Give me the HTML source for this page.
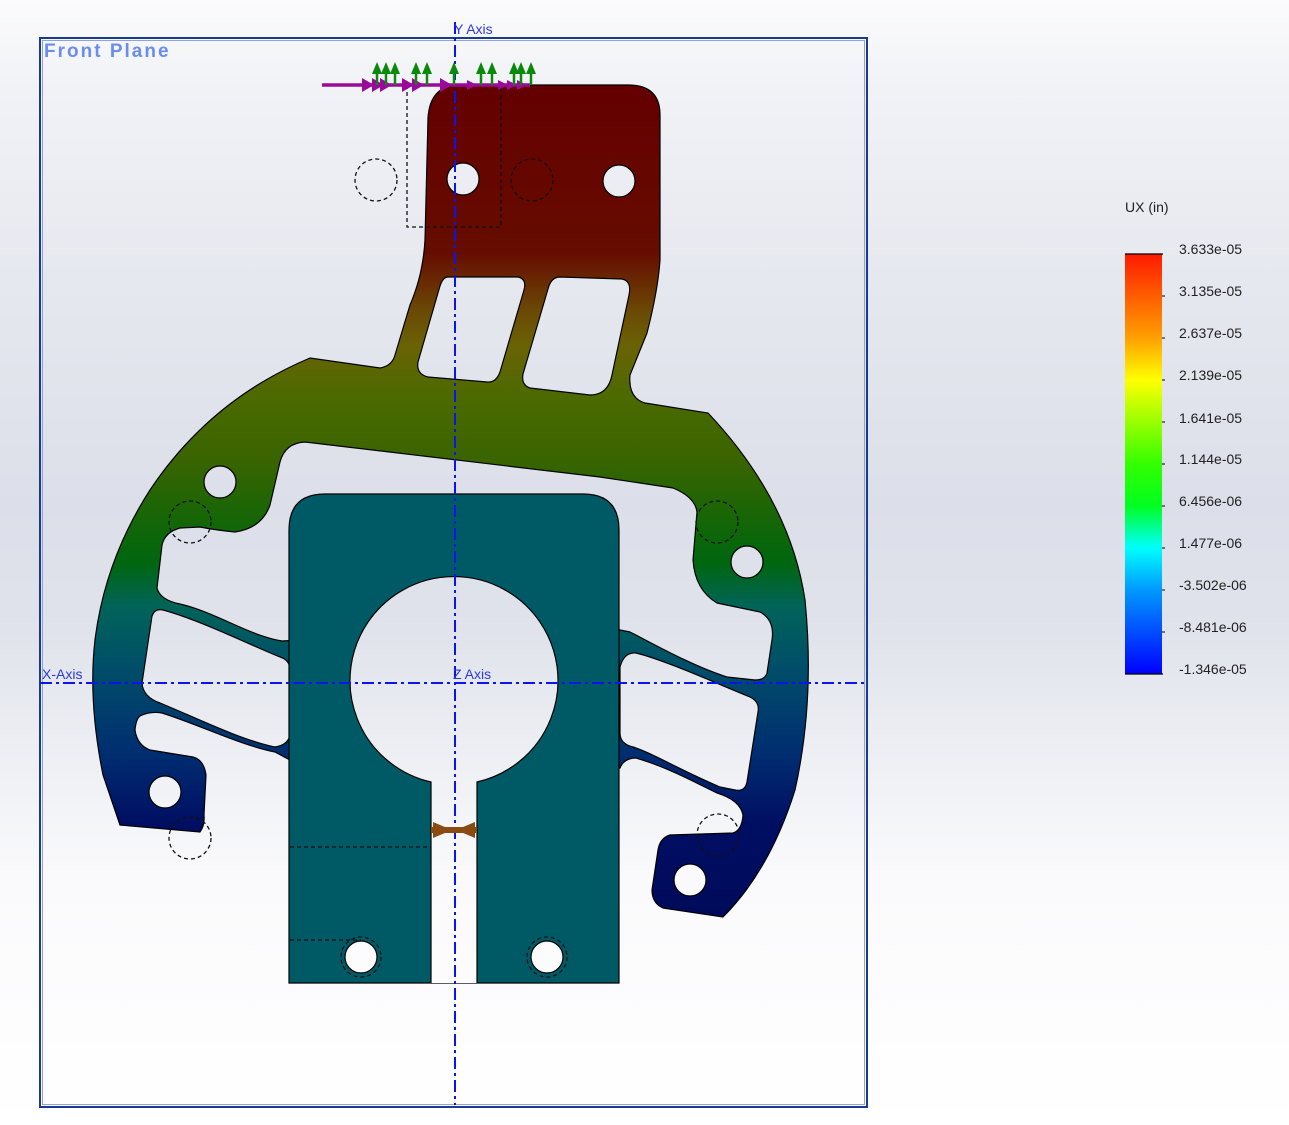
<!DOCTYPE html>
<html><head><meta charset="utf-8"><style>
html,body{margin:0;padding:0;width:1289px;height:1125px;overflow:hidden;background:#fff}
svg{display:block}
text{font-family:"Liberation Sans",sans-serif}
</style></head><body>
<svg width="1289" height="1125" viewBox="0 0 1289 1125" xmlns="http://www.w3.org/2000/svg">
<defs>
<linearGradient id="bg" gradientUnits="userSpaceOnUse" x1="0" y1="0" x2="0" y2="1125">
<stop offset="0" stop-color="#fbfbfc"/><stop offset="0.08" stop-color="#f1f2f6"/>
<stop offset="0.25" stop-color="#e6e8ef"/><stop offset="0.45" stop-color="#dcdfe9"/>
<stop offset="0.56" stop-color="#e0e3eb"/><stop offset="0.68" stop-color="#eef0f4"/>
<stop offset="0.78" stop-color="#fafafc"/><stop offset="1" stop-color="#ffffff"/>
</linearGradient>
<linearGradient id="pg" gradientUnits="userSpaceOnUse" x1="0" y1="85" x2="0" y2="925">
<stop offset="0" stop-color="#640000"/>
<stop offset="0.2" stop-color="#660c00"/>
<stop offset="0.27" stop-color="#6a4a05"/>
<stop offset="0.31" stop-color="#6a6205"/>
<stop offset="0.37" stop-color="#4c6a00"/>
<stop offset="0.45" stop-color="#386400"/>
<stop offset="0.53" stop-color="#0f6608"/>
<stop offset="0.57" stop-color="#006610"/>
<stop offset="0.62" stop-color="#006458"/>
<stop offset="0.7" stop-color="#004c6a"/>
<stop offset="0.8" stop-color="#002c70"/>
<stop offset="0.88" stop-color="#000e62"/>
<stop offset="1" stop-color="#000a5a"/>
</linearGradient>
<linearGradient id="lg" x1="0" y1="0" x2="0" y2="1">
<stop offset="0" stop-color="#ff1a00"/><stop offset="0.2" stop-color="#ffa000"/>
<stop offset="0.3" stop-color="#ffff00"/><stop offset="0.5" stop-color="#33ff00"/>
<stop offset="0.6" stop-color="#00ff20"/><stop offset="0.7" stop-color="#00ffff"/>
<stop offset="0.8" stop-color="#0099ff"/><stop offset="1" stop-color="#0000ff"/>
</linearGradient>
</defs>
<rect x="0" y="0" width="1289" height="1125" fill="url(#bg)"/>
<rect x="40" y="38" width="827" height="1069" fill="none" stroke="#1a3a8c" stroke-width="2"/>
<rect x="42.5" y="40.5" width="822" height="1064" fill="none" stroke="#8ea2dd" stroke-width="1"/>
<text x="44" y="57" font-size="19" font-weight="bold" fill="#6a8df0" letter-spacing="2">Front Plane</text>

<g stroke="#000" stroke-width="1.2">
<path fill="url(#pg)" d="M120,825 L103,775 Q88,700 95,640 Q105,560 150,490 Q210,400 310,358 L380,368 Q392,366 395,355 L410,305 Q423,275 425,240 L428,118 Q430,85 460,85 L628,85 Q660,85 660,115 L660,260 Q658,290 647,333 L630,375 Q628,398 645,403 L708,413 Q790,500 805,600 Q815,700 795,790 Q770,870 723,917 L663,908 Q652,903 652,890 L658,850 Q660,838 670,835 L733,833 Q742,830 743,815 Q740,800 717,793 C700,785 670,768 636,758 Q624,758 620,768 L290,760 L275,752 C240,745 200,725 162,713 Q150,711 140,716 Q136,719 135,730 Q137,745 150,750 L193,757 Q204,760 206,775 L204,815 Q205,825 200,832 Z"/>
<path fill="url(#bg)" d="M448,277 L518,277 Q527,279 524,290 L500,372 Q496,383 487,382 L428,377 Q416,374 418,362 L440,286 Q443,277 448,277 Z"/>
<path fill="url(#bg)" d="M560,277 L622,279 Q632,281 629,295 L612,375 Q608,395 590,395 L530,388 Q521,385 523,374 L548,289 Q551,277 560,277 Z"/>
<path fill="url(#bg)" d="M157,588 L162,545 Q165,532 180,528 L200,527 Q215,530 235,532 Q262,528 270,505 L280,462 Q285,443 305,442 L600,477 L673,488 Q695,497 697,512 L693,560 Q695,590 717,603 L760,612 Q775,620 772,640 L767,673 Q765,680 755,680 L727,677 C690,665 650,642 630,632 L610,628 L300,640 L282,641 C250,636 215,612 180,604 Q160,600 157,588 Z"/>
<path fill="url(#bg)" d="M163,610 C200,620 250,645 280,657 Q290,660 290,670 L290,735 Q288,745 275,747 C240,740 190,715 160,703 Q143,697 142,683 L152,616 Q155,608 163,610 Z"/>
<path fill="url(#bg)" d="M620,667 Q624,652 636,653 C665,660 720,685 750,697 Q760,702 758,712 L747,782 Q745,792 735,790 L720,787 C680,770 650,752 633,747 Q620,744 620,733 Z"/>
<circle cx="463" cy="179" r="16" fill="url(#bg)"/>
<circle cx="619" cy="181" r="16" fill="url(#bg)"/>
<circle cx="220" cy="482" r="16" fill="url(#bg)"/>
<circle cx="747" cy="562" r="16" fill="url(#bg)"/>
<circle cx="165" cy="792" r="16" fill="url(#bg)"/>
<circle cx="690" cy="880" r="16" fill="url(#bg)"/>
<path fill="#005a66" d="M289,530 Q289,494 325,494 L583,494 Q619,494 619,530 L619,983 L289,983 Z"/>
<path fill="url(#bg)" d="M431,983 L431,782 A104,104 0 1 1 477,782 L477,983"/>
<circle cx="361" cy="957" r="16" fill="url(#bg)"/>
<circle cx="547" cy="957" r="16" fill="url(#bg)"/>
</g>

<g fill="none" stroke="#111" stroke-width="1.3" stroke-dasharray="4,3">
<circle cx="376" cy="180" r="21"/><circle cx="532" cy="180" r="21"/>
<circle cx="190" cy="522" r="21"/><circle cx="717" cy="522" r="21"/>
<circle cx="190" cy="838" r="21"/><circle cx="718" cy="835" r="21"/>
<circle cx="361" cy="957" r="20"/><circle cx="547" cy="957" r="20"/>
<path d="M407,85 L407,227 L501,227 L501,85"/>
<path d="M290,847 L431,847"/>
<path d="M290,940 L361,940"/>
</g>

<g stroke="#0a14ee" stroke-width="2" stroke-dasharray="12,4,3,4" fill="none">
<line x1="455" y1="22" x2="455" y2="1105"/>
<line x1="40" y1="683" x2="866" y2="683"/>
</g>
<g font-size="14" fill="#2a3ae0">
<text x="454" y="34">Y Axis</text>
<text x="42" y="679">X-Axis</text>
<text x="453" y="679">Z Axis</text>
</g>

<line x1="322" y1="85" x2="530" y2="85" stroke="#9a0a9a" stroke-width="3.5"/>
<g fill="#9a0a9a">
<path d="M362,78 L374,85 L362,92Z"/><path d="M372,78 L384,85 L372,92Z"/><path d="M380,78 L392,85 L380,92Z"/>
<path d="M402,78 L414,85 L402,92Z"/><path d="M412,78 L424,85 L412,92Z"/><path d="M440,78 L452,85 L440,92Z"/>
<path d="M467,80 L477,85 L467,90Z"/><path d="M498,80 L508,85 L498,90Z"/><path d="M507,80 L517,85 L507,90Z"/><path d="M517,80 L527,85 L517,90Z"/>
</g>
<g fill="#0a8a0a" stroke="#0a8a0a">
<g stroke-width="2.5">
<line x1="377" y1="72" x2="377" y2="85"/><line x1="386" y1="72" x2="386" y2="85"/><line x1="395" y1="72" x2="395" y2="85"/>
<line x1="416" y1="72" x2="416" y2="85"/><line x1="427" y1="72" x2="427" y2="85"/><line x1="454" y1="72" x2="454" y2="85"/>
<line x1="481" y1="72" x2="481" y2="85"/><line x1="492" y1="72" x2="492" y2="85"/><line x1="514" y1="72" x2="514" y2="85"/>
<line x1="521" y1="72" x2="521" y2="85"/><line x1="531" y1="72" x2="531" y2="85"/>
</g>
<g stroke="none">
<path d="M372,74 L377,62 L382,74Z"/><path d="M381,74 L386,62 L391,74Z"/><path d="M390,74 L395,62 L400,74Z"/>
<path d="M411,74 L416,62 L421,74Z"/><path d="M422,74 L427,62 L432,74Z"/><path d="M449,74 L454,62 L459,74Z"/>
<path d="M476,74 L481,62 L486,74Z"/><path d="M487,74 L492,62 L497,74Z"/><path d="M509,74 L514,62 L519,74Z"/>
<path d="M516,74 L521,62 L526,74Z"/><path d="M526,74 L531,62 L536,74Z"/>
</g>
</g>
<g fill="#8b4a10">
<rect x="431" y="827" width="46" height="6"/>
<path d="M433,822 L452,830 L433,838Z"/><path d="M475,822 L456,830 L475,838Z"/>
</g>

<text x="1125" y="212" font-size="14" fill="#222">UX (in)</text>
<rect x="1125" y="254" width="37" height="420" fill="url(#lg)"/>
<line x1="1125" y1="254" x2="1163" y2="254" stroke="#000" stroke-width="1.2"/>
<line x1="1125" y1="674" x2="1163" y2="674" stroke="#000" stroke-width="1.2"/>
<g stroke="#000" stroke-width="1">
<line x1="1162" y1="296" x2="1165" y2="296"/><line x1="1162" y1="338" x2="1165" y2="338"/>
<line x1="1162" y1="380" x2="1165" y2="380"/><line x1="1162" y1="422" x2="1165" y2="422"/>
<line x1="1162" y1="464" x2="1165" y2="464"/><line x1="1162" y1="506" x2="1165" y2="506"/>
<line x1="1162" y1="548" x2="1165" y2="548"/><line x1="1162" y1="590" x2="1165" y2="590"/>
<line x1="1162" y1="632" x2="1165" y2="632"/>
</g>
<g font-size="14" fill="#222">
<text x="1179" y="254">3.633e-05</text>
<text x="1179" y="296">3.135e-05</text>
<text x="1179" y="338">2.637e-05</text>
<text x="1179" y="380">2.139e-05</text>
<text x="1179" y="423">1.641e-05</text>
<text x="1179" y="464">1.144e-05</text>
<text x="1179" y="506">6.456e-06</text>
<text x="1179" y="548">1.477e-06</text>
<text x="1179" y="590">-3.502e-06</text>
<text x="1179" y="632">-8.481e-06</text>
<text x="1179" y="674">-1.346e-05</text>
</g>
</svg>
</body></html>
